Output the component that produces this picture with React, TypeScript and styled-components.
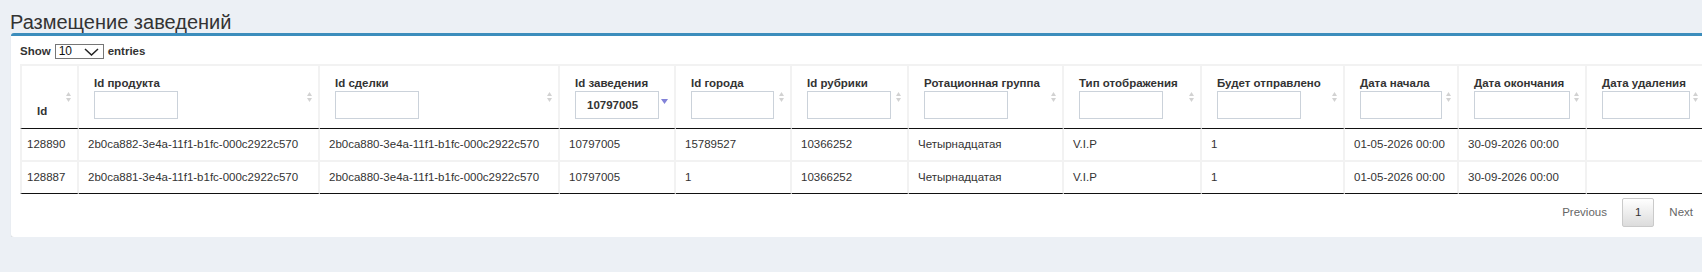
import styled, { createGlobalStyle } from "styled-components";

const GlobalStyle = createGlobalStyle`
  html,
  body {
    margin: 0;
    padding: 0;
    overflow: hidden;
    background: #ecf0f5;
  }

  body {
    font-family: "Liberation Sans", Arial, sans-serif;
    color: #333;
  }

  * {
    box-sizing: border-box;
  }
`;

type Column = {
  title: string;
  width: number;
  input?: number;
  value?: string;
  sort?: "both" | "desc";
};

const columns: Column[] = [
  { title: "Id", width: 59 },
  { title: "Id продукта", width: 241, input: 84 },
  { title: "Id сделки", width: 240, input: 84 },
  { title: "Id заведения", width: 116, input: 84, value: "10797005", sort: "desc" },
  { title: "Id города", width: 116, input: 83 },
  { title: "Id рубрики", width: 117, input: 84 },
  { title: "Ротационная группа", width: 155, input: 84 },
  { title: "Тип отображения", width: 138, input: 84 },
  { title: "Будет отправлено", width: 143, input: 84 },
  { title: "Дата начала", width: 114, input: 82 },
  { title: "Дата окончания", width: 128, input: 96 },
  { title: "Дата удаления", width: 119, input: 88 },
];

const rows: string[][] = [
  [
    "128890",
    "2b0ca882-3e4a-11f1-b1fc-000c2922c570",
    "2b0ca880-3e4a-11f1-b1fc-000c2922c570",
    "10797005",
    "15789527",
    "10366252",
    "Четырнадцатая",
    "V.I.P",
    "1",
    "01-05-2026 00:00",
    "30-09-2026 00:00",
    "",
  ],
  [
    "128887",
    "2b0ca881-3e4a-11f1-b1fc-000c2922c570",
    "2b0ca880-3e4a-11f1-b1fc-000c2922c570",
    "10797005",
    "1",
    "10366252",
    "Четырнадцатая",
    "V.I.P",
    "1",
    "01-05-2026 00:00",
    "30-09-2026 00:00",
    "",
  ],
];

const Page = styled.div`
  padding: 11px 0 0 11px;
`;

const Title = styled.h3`
  margin: 0 0 0 -1px;
  font-size: 20px;
  line-height: 22px;
  font-weight: 400;
  color: #333;
  white-space: nowrap;
`;

const Box = styled.div`
  width: 1704px;
  padding: 8px 9px 10px;
  background: #fff;
  border-top: 3px solid #3c8dbc;
  border-radius: 3px;
  box-shadow: 0 1px 1px rgba(0, 0, 0, 0.12);
`;

const LengthRow = styled.div`
  display: flex;
  align-items: center;
  gap: 4px;
  height: 15px;
  font-size: 11.5px;
  font-weight: 700;
  line-height: 15px;
`;

const FakeSelect = styled.div`
  display: flex;
  align-items: center;
  justify-content: space-between;
  width: 49px;
  height: 15px;
  padding: 0 4px 0 3px;
  border: 1px solid #767676;
  font-size: 12px;
  font-weight: 400;
  color: #111;
`;

const Table = styled.table`
  width: 1686px;
  margin-top: 5px;
  table-layout: fixed;
  border-collapse: separate;
  border-spacing: 0;
  font-size: 11.5px;
  line-height: 15px;
`;

const HeadCell = styled.th<{ $width: number; $first?: boolean }>`
  position: relative;
  width: ${(p) => p.$width}px;
  padding: 10px 18px 9px 15px;
  border-top: 2px solid #f2f2f2;
  border-right: 2px solid #f2f2f2;
  border-bottom: 1px solid #111;
  border-left: ${(p) => (p.$first ? "2px solid #f2f2f2" : "0")};
  vertical-align: bottom;
  text-align: left;
  font-weight: 700;
  white-space: nowrap;
  color: #333;
`;

const FilterInput = styled.input<{ $width: number }>`
  display: block;
  width: ${(p) => p.$width}px;
  height: 28px;
  margin: 0;
  padding: 0 11px;
  border: 1px solid #cbd2da;
  border-radius: 0;
  background: #fff;
  font-family: inherit;
  font-size: 11.5px;
  font-weight: 700;
  color: #333;
  outline: none;
`;

const SortIcon = styled.svg<{ $desc?: boolean }>`
  position: absolute;
  right: 6px;
  top: ${(p) => (p.$desc ? "33px" : "26px")};
`;

const BodyCell = styled.td<{ $first?: boolean; $sep?: boolean; $last?: boolean }>`
  padding: ${(p) => (p.$first ? "8px 0 8px 5px" : "8px 9px")};
  border-right: 2px solid #f2f2f2;
  border-left: ${(p) => (p.$first ? "2px solid #f2f2f2" : "0")};
  border-top: ${(p) => (p.$sep ? "2px solid #f2f2f2" : "0")};
  border-bottom: ${(p) => (p.$last ? "1px solid #111" : "0")};
  white-space: nowrap;
  overflow: hidden;
  color: #333;
`;

const Pager = styled.div`
  display: flex;
  justify-content: flex-end;
  margin-top: 4px;
  font-size: 11.5px;
  line-height: 15px;
`;

const PagerButton = styled.span<{ $current?: boolean }>`
  margin-left: 2px;
  padding: 6px 12px;
  border: 1px solid ${(p) => (p.$current ? "#cacaca" : "transparent")};
  border-radius: 2px;
  background: ${(p) => (p.$current ? "linear-gradient(#fff 0%, #dcdcdc 100%)" : "transparent")};
  color: ${(p) => (p.$current ? "#333" : "#666")};
`;

const SortBoth = () => (
  <SortIcon width="5" height="10" viewBox="0 0 5 10">
    <polygon points="2.5,0 5,4 0,4" fill="#d2d2d2" />
    <polygon points="0,6 5,6 2.5,10" fill="#d2d2d2" />
  </SortIcon>
);

const SortDesc = () => (
  <SortIcon $desc width="7" height="5" viewBox="0 0 7 5">
    <polygon points="0,0 7,0 3.5,5" fill="#8282d8" />
  </SortIcon>
);

export default function App() {
  return (
    <>
      <GlobalStyle />
      <Page>
        <Title>Размещение заведений</Title>
        <Box>
          <LengthRow>
            Show
            <FakeSelect>
              <span>10</span>
              <svg width="15" height="8" viewBox="0 0 15 8">
                <polyline points="1,1 7.5,7 14,1" fill="none" stroke="#222" strokeWidth="1.5" />
              </svg>
            </FakeSelect>
            entries
          </LengthRow>

          <Table>
            <thead>
              <tr>
                {columns.map((col, i) => (
                  <HeadCell key={col.title} $width={col.width} $first={i === 0}>
                    {col.title}
                    {col.input && <FilterInput $width={col.input} defaultValue={col.value ?? ""} />}
                    {col.sort === "desc" ? <SortDesc /> : <SortBoth />}
                  </HeadCell>
                ))}
              </tr>
            </thead>
            <tbody>
              {rows.map((row, r) => (
                <tr key={r}>
                  {row.map((cell, c) => (
                    <BodyCell key={c} $first={c === 0} $sep={r > 0} $last={r === rows.length - 1}>
                      {cell}
                    </BodyCell>
                  ))}
                </tr>
              ))}
            </tbody>
          </Table>

          <Pager>
            <PagerButton>Previous</PagerButton>
            <PagerButton $current>1</PagerButton>
            <PagerButton>Next</PagerButton>
          </Pager>
        </Box>
      </Page>
    </>
  );
}
